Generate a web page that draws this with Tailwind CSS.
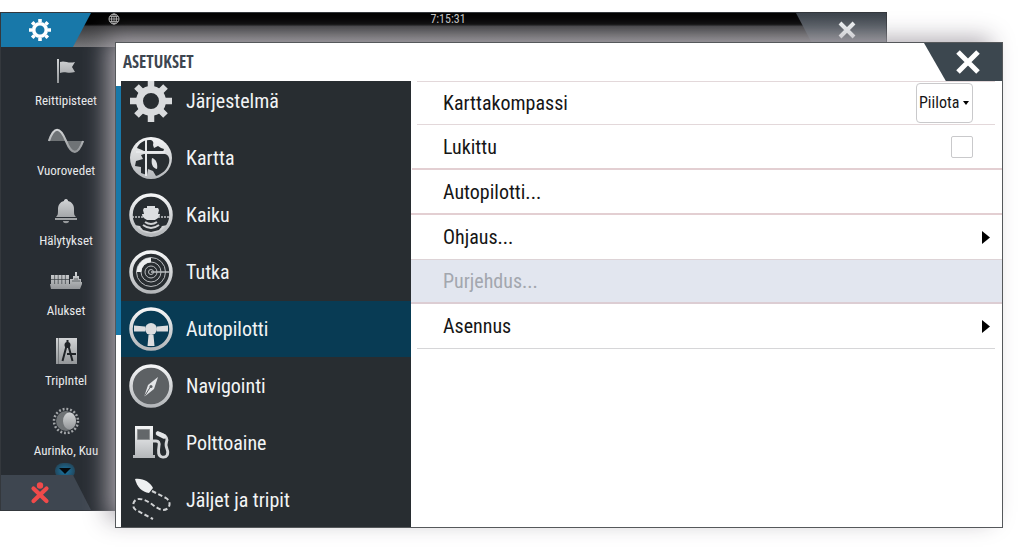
<!DOCTYPE html>
<html lang="fi">

<head>
    <meta charset="UTF-8">
    <meta name="viewport" content="width=device-width, initial-scale=1.0">
    <title>Asetukset</title>
    <script src="https://cdn.jsdelivr.net/npm/@tailwindcss/browser@4"></script>
</head>

<body class="bg-white min-h-screen font-['Roboto_Condensed','Noto_Sans',sans-serif]">
    <!-- shared gradients for the metal icons -->
    <svg class="absolute w-0 h-0" aria-hidden="true">
        <defs>
            <linearGradient id="metal" x1="0" y1="0" x2="0" y2="1">
                <stop offset="0" stop-color="#f4f5f6" />
                <stop offset="1" stop-color="#b4b7ba" />
            </linearGradient>
            <linearGradient id="dim" x1="0" y1="0" x2="0" y2="1">
                <stop offset="0" stop-color="#d2d4d6" />
                <stop offset="1" stop-color="#94979a" />
            </linearGradient>
        </defs>
    </svg>

    <main class="grid overflow-hidden pb-6">
        <!-- main screen -->
        <section class="col-start-1 row-start-1 self-start mt-3 mr-[137px] flex flex-col bg-[#282d33] border border-[#34383d]">
            <header class="flex h-[34px] bg-linear-to-b from-black from-30% via-[#3c3c3e] via-40% to-[#77777a]">
                <button aria-label="Asetukset" class="w-[90px] pr-3 flex items-center justify-center bg-[#1878a9] [clip-path:polygon(0_0,100%_0,80%_100%,0_100%)]">
                    <svg class="w-6 h-6" viewBox="0 0 24 24" fill="none" stroke="#fff">
                        <circle cx="12" cy="12" r="6.3" stroke-width="3.6" />
                        <path stroke-width="3.6" d="M12 1v3M12 20v3M1 12h3M20 12h3M4.2 4.2l2.2 2.2M17.6 17.6l2.2 2.2M4.2 19.8l2.2-2.2M17.6 6.4l2.2-2.2" />
                    </svg>
                </button>
                <div class="flex-1 flex items-start pl-[17px]">
                    <svg class="w-3 h-3" viewBox="0 0 12 12" fill="none" stroke="#b5b5b5">
                        <circle cx="6" cy="6" r="5" />
                        <ellipse cx="6" cy="6" rx="2.4" ry="5" />
                        <path d="M1 6h10M6 1v10M2 3.5h8M2 8.5h8" stroke-width=".8" />
                    </svg>
                    <time class="flex-1 pr-5 text-center text-xs leading-3 text-[#c4c4c4]">7:15:31</time>
                </div>
                <button aria-label="Sulje" class="w-[90px] pl-3 flex items-center justify-center bg-linear-to-b from-[#3b434b] to-[#74777d] [clip-path:polygon(0_0,100%_0,100%_100%,20%_100%)]">
                    <svg class="w-[18px] h-[18px]" viewBox="0 0 18 18" stroke="#eef1f3" stroke-width="4"><path d="M2 2l14 14M16 2L2 16" /></svg>
                </button>
            </header>
            <nav class="relative w-[130px] flex flex-col pb-2 text-[13px] text-[#e8eaec]">
                <a href="#" class="h-[70px] pt-2 flex flex-col items-center gap-0.5">
                    <svg class="w-10 h-8" viewBox="0 0 40 32" fill="url(#dim)">
                        <path d="M11 4h2v24h-2zM14 7c5-2 8 2 15 0l-3 5 3 5c-7 2-10-1-15 1z" />
                    </svg>
                    <span class="leading-6">Reittipisteet</span>
                </a>
                <a href="#" class="h-[70px] pt-2 flex flex-col items-center gap-0.5">
                    <svg class="w-10 h-8" viewBox="0 0 40 32">
                        <path fill="#6f7376" d="M2 16C7 1 15 1 20 16s12 14 18 0z" />
                        <path fill="none" stroke="url(#dim)" stroke-width="2.2" d="M3 16C8 1 14 1 20 16s12 14 17 0" />
                    </svg>
                    <span class="leading-6">Vuorovedet</span>
                </a>
                <a href="#" class="h-[70px] pt-2 flex flex-col items-center gap-0.5">
                    <svg class="w-10 h-8" viewBox="0 0 40 32" fill="url(#dim)">
                        <path d="M20 4c1.5 0 2 1 2 2 4 1 6 4 6 8 0 5 0 6 2 8H10c2-2 2-3 2-8 0-4 2-7 6-8 0-1 .5-2 2-2zM9 23h22v2H9zM17 26h6c0 3-6 3-6 0z" />
                    </svg>
                    <span class="leading-6">Hälytykset</span>
                </a>
                <a href="#" class="h-[70px] pt-2 flex flex-col items-center gap-0.5">
                    <svg class="w-10 h-8" viewBox="0 0 40 32">
                        <path fill="url(#dim)" d="M5 10h18v9H5zM24 19v-5h3v-3h2V7h2v4h2v3h2v3h1v2zM4 19h32l-2 5H5z" />
                        <path stroke="#3a3f44" stroke-width=".7" d="M5 14.5h18M8.6 10v9M12.2 10v9M15.8 10v9M19.4 10v9M26 16h8M28 14h4" />
                    </svg>
                    <span class="leading-6">Alukset</span>
                </a>
                <a href="#" class="h-[70px] pt-2 flex flex-col items-center gap-0.5">
                    <svg class="w-10 h-8" viewBox="0 0 40 32">
                        <path fill="url(#dim)" d="M10 3h21v26H10z" />
                        <path fill="none" stroke="#777a7d" d="M12.5 3v26" />
                        <circle cx="21.5" cy="10" r="3" fill="#202428" />
                        <path fill="none" stroke="#202428" stroke-width="2" d="M21.5 5v4M20.5 11l-4 15M22.5 11l4 15M21 19h9" />
                    </svg>
                    <span class="leading-6">TripIntel</span>
                </a>
                <a href="#" class="h-[70px] pt-2 flex flex-col items-center gap-0.5">
                    <svg class="w-10 h-8" viewBox="0 0 40 32">
                        <circle cx="20" cy="16" r="12" fill="none" stroke="#a4a7aa" stroke-width="2.5" stroke-dasharray="1.9 1.87" />
                        <circle cx="20" cy="16" r="10" fill="#6f7376" />
                        <ellipse cx="23.5" cy="16" rx="6.5" ry="8.5" fill="url(#dim)" />
                    </svg>
                    <span class="leading-6">Aurinko, Kuu</span>
                </a>
                <span class="absolute -bottom-1 left-[54px] w-5 h-4 rounded-full flex items-center justify-center bg-radial from-[#1878a9] to-[#1878a9]/10">
                    <svg class="w-3 h-2" viewBox="0 0 12 8"><path d="M0 1h12L6 7z" fill="#05090c" /></svg>
                </span>
            </nav>
            <footer class="flex">
                <button aria-label="Mies yli laidan" class="w-[90px] h-[35px] pr-3 flex items-center justify-center bg-[#3e4650] [clip-path:polygon(0_0,80%_0,100%_100%,0_100%)]">
                    <svg class="w-5 h-[22px]" viewBox="0 0 20 22">
                        <circle cx="10" cy="3.5" r="3.2" fill="#f04a4a" />
                        <path d="M3.5 6.5L16.5 19M16.5 6.5L3.5 19" stroke="#f04a4a" stroke-width="4.2" stroke-linecap="round" />
                    </svg>
                </button>
            </footer>
        </section>

        <!-- settings dialog -->
        <section role="dialog" aria-labelledby="title" class="col-start-1 row-start-1 self-start z-10 mt-[42px] ml-[115px] mr-[21px] flex flex-col bg-white border border-[#55585b] shadow-[-10px_-6px_22px_-2px_rgba(172,166,174,0.95)]">
            <header class="flex h-[38px] items-center justify-between pl-[7px]">
                <h1 id="title" class="text-[17px] font-bold font-['Open_Sans_Condensed','Roboto_Condensed',sans-serif] text-[#3d4650]">ASETUKSET</h1>
                <button aria-label="Sulje" class="w-[78px] h-full pl-2.5 flex items-center justify-center bg-[#3c474f] [clip-path:polygon(0_0,100%_0,100%_100%,28%_100%)]">
                    <svg class="w-6 h-6" viewBox="0 0 24 24" stroke="#fff" stroke-width="5"><path d="M2 2l20 20M22 2L2 22" /></svg>
                </button>
            </header>
            <div class="flex">
                <div class="w-[5px] pt-[5px]"><div class="h-[249px] bg-[#1878a9]"></div></div>
                <nav class="w-[290px] h-[446px] overflow-hidden bg-[#282d31] text-xl text-[#f2f4f5]">
                    <div class="-mt-2 flex flex-col gap-px">
                        <a href="#" class="h-14 pl-2 flex items-center gap-[13px]">
                            <svg class="w-11 h-11" viewBox="0 0 44 44" fill="none" stroke="#d9dbdd">
                                <circle cx="22" cy="22" r="11.5" stroke-width="7" />
                                <path stroke-width="6.5" d="M22 1v7M22 36v7M1 22h7M36 22h7M7.5 7.5l5 5M31.5 31.5l5 5M7.5 36.5l5-5M31.5 12.5l5-5" />
                            </svg>
                            Järjestelmä
                        </a>
                        <a href="#" class="h-14 pl-2 flex items-center gap-[13px]">
                            <svg class="w-11 h-11" viewBox="0 0 44 44">
                                <circle cx="22" cy="22" r="21" fill="url(#metal)" />
                                <path fill="#282d31" d="M8 12c2-5 7-8 12-8 4 0 5 2 4 5l1 3 4-2 3 2 3 1-1 3H17l-4-2zM15 18h21c4 1 5 5 4 9-2 7-7 11-13 13l-3-5-5-2-1 6-6-2v-6l-6-1 1-5 7-2-2-4z" />
                                <path fill="#dfe1e3" d="M23 22c4 1 6 6 5 11-5-1-6-6-5-11z" />
                                <path stroke="#e6e8ea" stroke-width="2" d="M7 16h29M17 4v36" />
                            </svg>
                            Kartta
                        </a>
                        <a href="#" class="h-14 pl-2 flex items-center gap-[13px]">
                            <svg class="w-11 h-11" viewBox="0 0 44 44" fill="none" stroke="url(#metal)">
                                <path fill="#cfd1d3" stroke="none" d="M5 32l6 1 3 4 8 2 8-2 3-4 6-1-5 8-12 4-12-4z" />
                                <circle cx="22" cy="22" r="20" stroke-width="3.5" />
                                <path fill="#dcdee0" stroke="none" d="M18 13h8v2h3l1 2-1 4h2c0 3-3 5-5 6h-8c-2-1-5-3-5-6h2l-1-4 1-2h3z" />
                                <path stroke="#c5c8ca" stroke-width="1.5" stroke-dasharray="2 1" d="M3 24h12M29 24h12" />
                                <path stroke="#d0d2d4" stroke-width="2" d="M16 29q6 4 12 0M14 32q8 6 16 0" />
                                <path stroke="#282d31" stroke-width="1.5" d="M12 34q10 7 20 0" />
                            </svg>
                            Kaiku
                        </a>
                        <a href="#" class="h-14 pl-2 flex items-center gap-[13px]">
                            <svg class="w-11 h-11" viewBox="0 0 44 44" fill="none" stroke="#b9bcbf">
                                <circle cx="22" cy="22" r="20" stroke="url(#metal)" stroke-width="3.5" />
                                <circle cx="22" cy="22" r="14.5" />
                                <circle cx="22" cy="22" r="10" />
                                <circle cx="22" cy="22" r="6" />
                                <circle cx="22" cy="22" r="2.5" />
                                <path d="M22 22h19" stroke-width="1.5" />
                                <path stroke="#eceeef" stroke-width="4.5" d="M10 22A12 12 0 0 1 22 10" />
                            </svg>
                            Tutka
                        </a>
                        <a href="#" aria-current="page" class="h-14 pl-2 flex items-center gap-[13px] bg-[#083b54]">
                            <svg class="w-11 h-11" viewBox="0 0 44 44" fill="#dcdddf">
                                <circle cx="22" cy="22" r="20" fill="none" stroke="url(#metal)" stroke-width="3.5" />
                                <path d="M5 18.5l11 1v5H5zM39 18.5l-11 1v5h11zM19.5 28h5l1 11h-7z" />
                                <circle cx="22" cy="22" r="6" />
                            </svg>
                            Autopilotti
                        </a>
                        <a href="#" class="h-14 pl-2 flex items-center gap-[13px]">
                            <svg class="w-11 h-11" viewBox="0 0 44 44">
                                <circle cx="22" cy="22" r="20" fill="#5d6164" stroke="url(#metal)" stroke-width="3.5" />
                                <path fill="#e4e6e8" d="M29 13l-4 12-10 8 4-12z" />
                                <path stroke="#5d6164" d="M15 33l7-11" />
                                <circle cx="22" cy="22.5" r="1.5" fill="#5d6164" />
                            </svg>
                            Navigointi
                        </a>
                        <a href="#" class="h-14 pl-2 flex items-center gap-[13px]">
                            <svg class="w-11 h-11" viewBox="0 0 44 44">
                                <path fill="url(#metal)" d="M6 5h18v29h2v3H4v-3h2z" />
                                <path fill="#63676a" stroke="#8d9092" d="M8.5 8.5h12v10h-12z" />
                                <path fill="none" stroke="#d4d6d8" stroke-width="2.8" stroke-linecap="round" d="M24 20h3q4 0 3 5c-1 6-1 10 3 11 5 1 7-3 5-8-2-4-1-6 0-9 0-4-4-6-9-7" />
                                <path stroke="#e4e6e8" stroke-width="4.5" stroke-linecap="round" d="M29 12.5l6 3" />
                            </svg>
                            Polttoaine
                        </a>
                        <a href="#" class="h-14 pl-2 flex items-center gap-[13px]">
                            <svg class="w-11 h-11" viewBox="0 0 44 44">
                                <path fill="#eef0f1" d="M6 1c8-1 15 3 18 9l-4 5C13 14 8 9 6 1z" />
                                <path fill="none" stroke="#d0d2d4" stroke-width="2" stroke-dasharray="4.5 2.5" d="M23 13l14 7c6 4 4 12-3 12-8-1-14-11-24-11-6 0-8 8-3 11l17 9" />
                            </svg>
                            Jäljet ja tripit
                        </a>
                    </div>
                </nav>
                <div class="flex-1 text-xl text-[#161616]">
                    <div class="ml-1.5 mr-[7px] h-11 pl-[26px] pr-[22px] flex items-center justify-between border-y border-[#e3d8da]">
                        <label for="compass">Karttakompassi</label>
                        <span class="relative flex">
                            <select id="compass" class="appearance-none w-[57px] h-10 pl-0.5 bg-white border border-[#c9c9cb] rounded-sm text-base">
                                <option>Piilota</option>
                            </select>
                            <svg class="absolute right-1 top-[18px] w-1.5 h-1 pointer-events-none" viewBox="0 0 6 4"><path d="M0 0h6L3 4z" /></svg>
                        </span>
                    </div>
                    <div class="ml-px h-[45px] pl-[31px] pr-[29px] flex items-center justify-between border-b-2 border-[#e3cfd2]">
                        <label for="locked">Lukittu</label>
                        <input id="locked" type="checkbox" class="appearance-none w-[22px] h-[22px] border border-[#c9c9cb] rounded-xs">
                    </div>
                    <button class="w-full h-[45px] pl-8 flex items-center border-b-2 border-[#e3cfd2]">Autopilotti...</button>
                    <button class="w-full h-[45px] pl-8 pr-3 flex items-center justify-between border-b border-[#ddd3d6]">
                        Ohjaus...
                        <svg class="w-2 h-[13px]" viewBox="0 0 8 13"><path d="M0 0l8 6.5L0 13z" /></svg>
                    </button>
                    <button disabled class="w-full h-11 pl-8 flex items-center border-b-2 border-[#dccdd3] bg-[#e2e6ef] text-[#a3a7ae]">Purjehdus...</button>
                    <div class="ml-1.5 mr-[7px] border-b border-[#d6d6d8]">
                        <button class="w-full h-11 pl-[26px] pr-[5px] flex items-center justify-between">
                            Asennus
                            <svg class="w-2 h-[13px]" viewBox="0 0 8 13"><path d="M0 0l8 6.5L0 13z" /></svg>
                        </button>
                    </div>
                </div>
            </div>
        </section>
    </main>
</body>

</html>
